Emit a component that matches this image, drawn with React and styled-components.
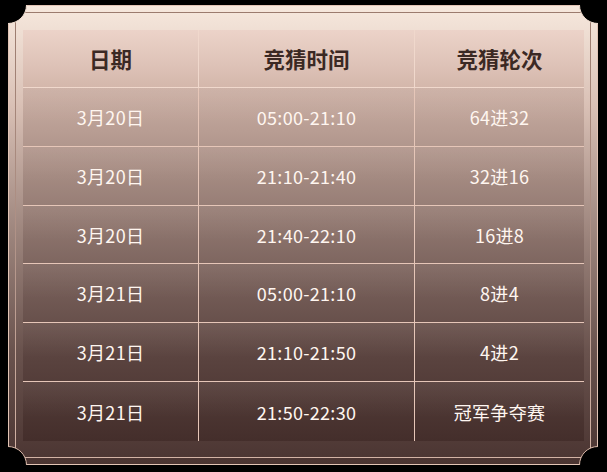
import styled, { createGlobalStyle, css } from "styled-components";

const GlobalStyle = createGlobalStyle`
  html, body {
    margin: 0;
    padding: 0;
    background: #000;
  }
  body {
    font-family: "Noto Sans CJK SC", "Noto Sans", sans-serif;
  }
`;

const rows = [
  { date: "3月20日", time: "05:00-21:10", round: "64进32" },
  { date: "3月20日", time: "21:10-21:40", round: "32进16" },
  { date: "3月20日", time: "21:40-22:10", round: "16进8" },
  { date: "3月21日", time: "05:00-21:10", round: "8进4" },
  { date: "3月21日", time: "21:10-21:50", round: "4进2" },
  { date: "3月21日", time: "21:50-22:30", round: "冠军争夺赛" },
];

const notch = css`
  content: "";
  position: absolute;
  width: 38px;
  height: 38px;
  border-radius: 50%;
  background: #000;
  box-sizing: border-box;
`;

const Frame = styled.div`
  position: relative;
  overflow: hidden;
  width: 590px;
  height: 460px;
  margin: 5px 0 0 8px;
  background: linear-gradient(180deg, #f7e9de 0%, #d9c0b5 22%, #9c847c 50%, #6a534e 75%, #4a3431 100%);

  &::before {
    ${notch};
    top: -19px;
    left: -19px;
    border: 1px solid #efdccf;
  }
  &::after {
    ${notch};
    top: -19px;
    right: -19px;
    border: 1px solid #efdccf;
  }
`;

const Edge = styled.div`
  height: 100%;
  box-sizing: border-box;
  padding: 6px;
  border: 1px solid #e2c4b5;

  &::before {
    ${notch};
    bottom: -19px;
    left: -19px;
    border: 1px solid #d9b8a8;
  }
  &::after {
    ${notch};
    bottom: -19px;
    right: -19px;
    border: 1px solid #d9b8a8;
  }
`;

const Inner = styled.div`
  height: 100%;
  box-sizing: border-box;
  padding: 17px 6px 16px 7px;
  border: 1px solid transparent;
  border-image: linear-gradient(180deg, #9b7b6e, #b09287 50%, #d3b3a5) 1;
`;

const Table = styled.div`
  display: grid;
  grid-template-columns: 176px 216px 1fr;
  grid-template-rows: 58px repeat(6, 1fr);
  height: 100%;
  background: linear-gradient(180deg, #cbafa4 14%, #a58b82 35%, #7c645e 58%, #5a433f 80%, #442e2b 100%);
`;

const HeadCell = styled.div`
  display: flex;
  align-items: center;
  justify-content: center;
  background: linear-gradient(180deg, #ecd3c9 0%, #dec3b8 60%, #d4b7ab 100%);
  color: #3b2924;
  font-size: 21.5px;
  font-weight: 700;
  border-bottom: 1px solid #f0d8cc;
  border-right: ${(p) => (p.$last ? "none" : "1px solid #f0d8cc")};
`;

const Cell = styled.div`
  display: flex;
  align-items: center;
  justify-content: center;
  color: #fff6f0;
  font-size: 18px;
  letter-spacing: 0.3px;
  background: linear-gradient(180deg, rgba(255, 240, 232, 0.07), rgba(255, 240, 232, 0) 60%);
  border-bottom: ${(p) => (p.$lastRow ? "none" : "1px solid #e6c6b8")};
  border-right: ${(p) => (p.$last ? "none" : "1px solid #e6c6b8")};
`;

export default function App() {
  return (
    <>
      <GlobalStyle />
      <Frame>
        <Edge>
          <Inner>
            <Table>
              <HeadCell>日期</HeadCell>
              <HeadCell>竞猜时间</HeadCell>
              <HeadCell $last>竞猜轮次</HeadCell>
              {rows.map((r, i) => {
                const lastRow = i === rows.length - 1;
                return [
                  <Cell key={`d${i}`} $lastRow={lastRow}>{r.date}</Cell>,
                  <Cell key={`t${i}`} $lastRow={lastRow}>{r.time}</Cell>,
                  <Cell key={`r${i}`} $lastRow={lastRow} $last>{r.round}</Cell>,
                ];
              })}
            </Table>
          </Inner>
        </Edge>
      </Frame>
    </>
  );
}
